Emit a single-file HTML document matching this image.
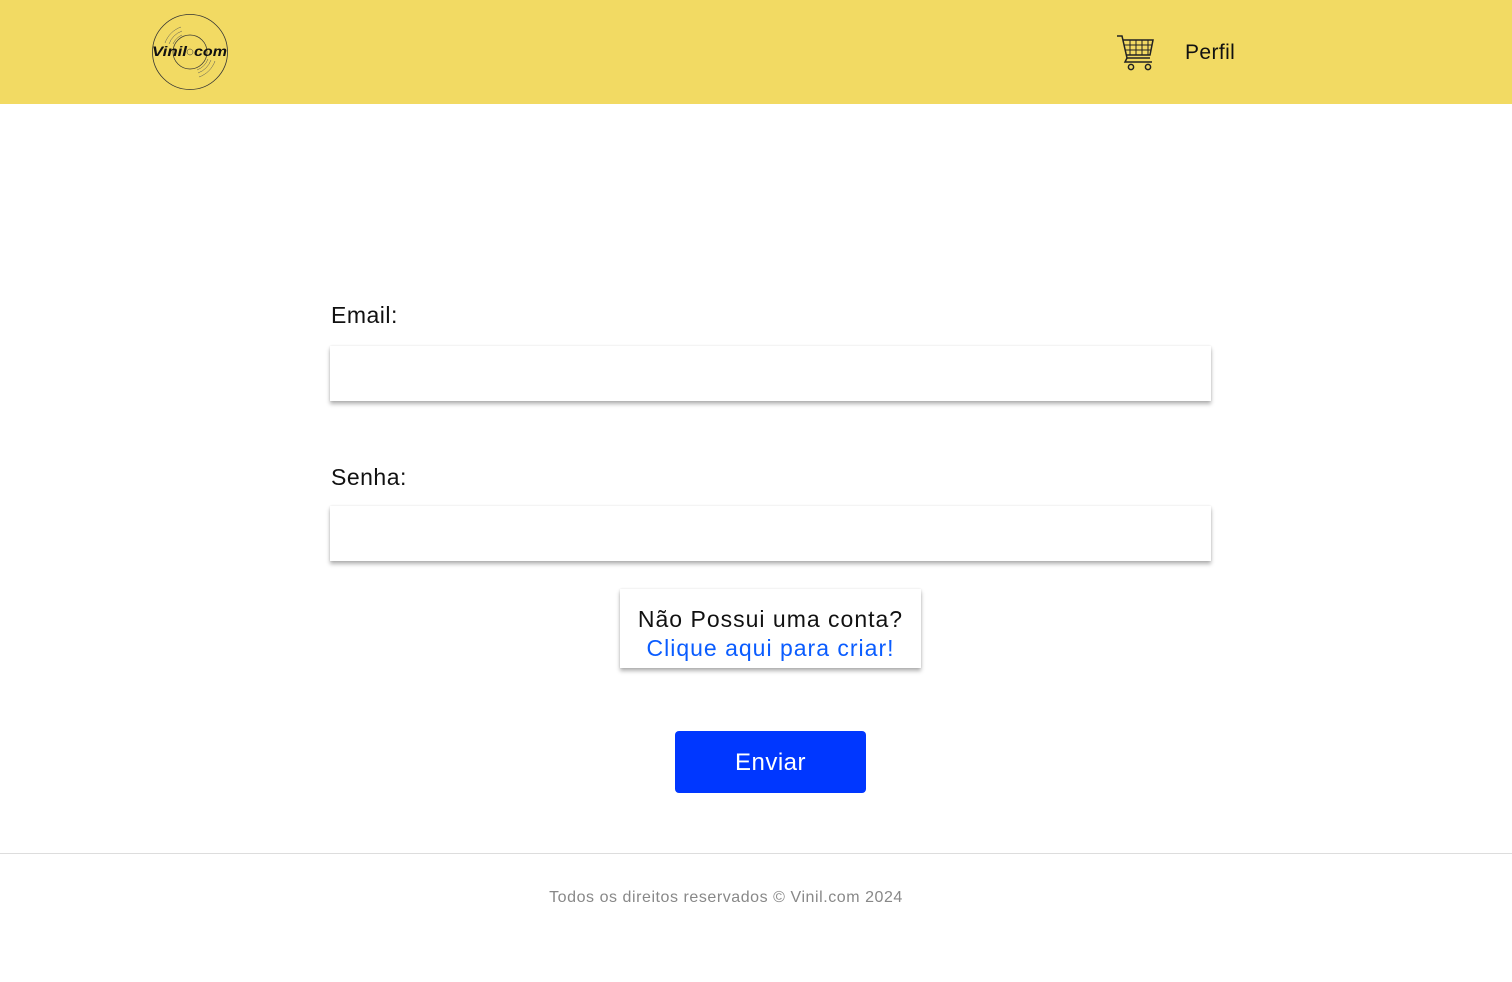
<!DOCTYPE html>
<html><head><meta charset="utf-8"><style>
*{margin:0;padding:0;box-sizing:border-box}
body{width:1512px;height:982px;background:#fff;font-family:"Liberation Sans",sans-serif;position:relative;overflow:hidden}
header{position:absolute;left:0;top:0;width:1512px;height:104px;background:#f2da63}
.lbl{position:absolute;left:331px;font-size:23px;color:#111;letter-spacing:0.5px}
.inp{position:absolute;left:330px;width:881px;height:55px;background:#fff;box-shadow:0 3px 4px rgba(0,0,0,.3),0 0 2px rgba(0,0,0,.1)}
.box{position:absolute;left:620px;top:589px;width:301px;height:79px;background:#fff;box-shadow:0 3px 4px rgba(0,0,0,.3),0 0 2px rgba(0,0,0,.1);text-align:center;font-size:23px;line-height:29px;padding-top:16px;color:#111;letter-spacing:1px}
.box a{color:#0a5cff;text-decoration:none}
.btn{position:absolute;left:675px;top:731px;width:191px;height:62px;background:#0037ff;border-radius:4px;color:#fff;font-size:24px;text-align:center;line-height:64px;letter-spacing:0.5px}
.foot{position:absolute;left:0;top:853px;width:1512px;border-top:1px solid #ddd}
.ft{position:absolute;top:889px;left:0;width:1452px;text-align:center;font-size:16px;color:#888;letter-spacing:0.55px}
</style></head><body>
<header>
<svg style="position:absolute;left:151px;top:13px" width="78" height="78" viewBox="0 0 78 78">
<circle cx="39" cy="39" r="37.5" fill="none" stroke="#333" stroke-width="0.8"/>
<circle cx="39" cy="39" r="17" fill="none" stroke="#333" stroke-width="0.7"/>
<g fill="none" stroke="#555" stroke-width="0.5">
<path d="M14 30 A26 26 0 0 1 30 14"/><path d="M18 31 A22 22 0 0 1 31 18"/><path d="M22 31 A18 18 0 0 1 31 22"/>
<path d="M64 48 A26 26 0 0 1 48 64"/><path d="M60 47 A22 22 0 0 1 47 60"/><path d="M57 46 A19 19 0 0 1 46 57"/>
</g>
<circle cx="39" cy="39" r="3" fill="#f2da63" stroke="#333" stroke-width="0.5"/>
<text x="1" y="43" font-family="Liberation Sans" font-weight="bold" font-style="italic" font-size="14" fill="#111" textLength="35" lengthAdjust="spacingAndGlyphs">Vinil</text>
<text x="43" y="43" font-family="Liberation Sans" font-weight="bold" font-style="italic" font-size="14" fill="#111" textLength="33" lengthAdjust="spacingAndGlyphs">com</text>
</svg>
<svg style="position:absolute;left:1116px;top:34px" width="40" height="38" viewBox="0 0 40 38" fill="none" stroke="#222" stroke-width="1.5">
<path d="M1 2 H6 L11 24 H34"/>
<path d="M7 6 H37 L34 21 H10"/>
<path d="M8 11 H36 M9 16 H35 M14 6 V21 M20 6 V21 M26 6 V21 M32 6 V21" stroke-width="1"/>
<path d="M11 24 L9 28 H36"/>
<circle cx="15" cy="33" r="2.6"/><circle cx="32" cy="33" r="2.6"/>
</svg>
<div style="position:absolute;left:1185px;top:41px;font-size:21px;color:#111;letter-spacing:0.4px">Perfil</div>
</header>
<div class="lbl" style="top:302px">Email:</div>
<div class="inp" style="top:346px"></div>
<div class="lbl" style="top:464px">Senha:</div>
<div class="inp" style="top:506px"></div>
<div class="box">Não Possui uma conta?<br><a>Clique aqui para criar!</a></div>
<div class="btn">Enviar</div>
<div class="foot"></div>
<div class="ft">Todos os direitos reservados © Vinil.com 2024</div>
</body></html>
